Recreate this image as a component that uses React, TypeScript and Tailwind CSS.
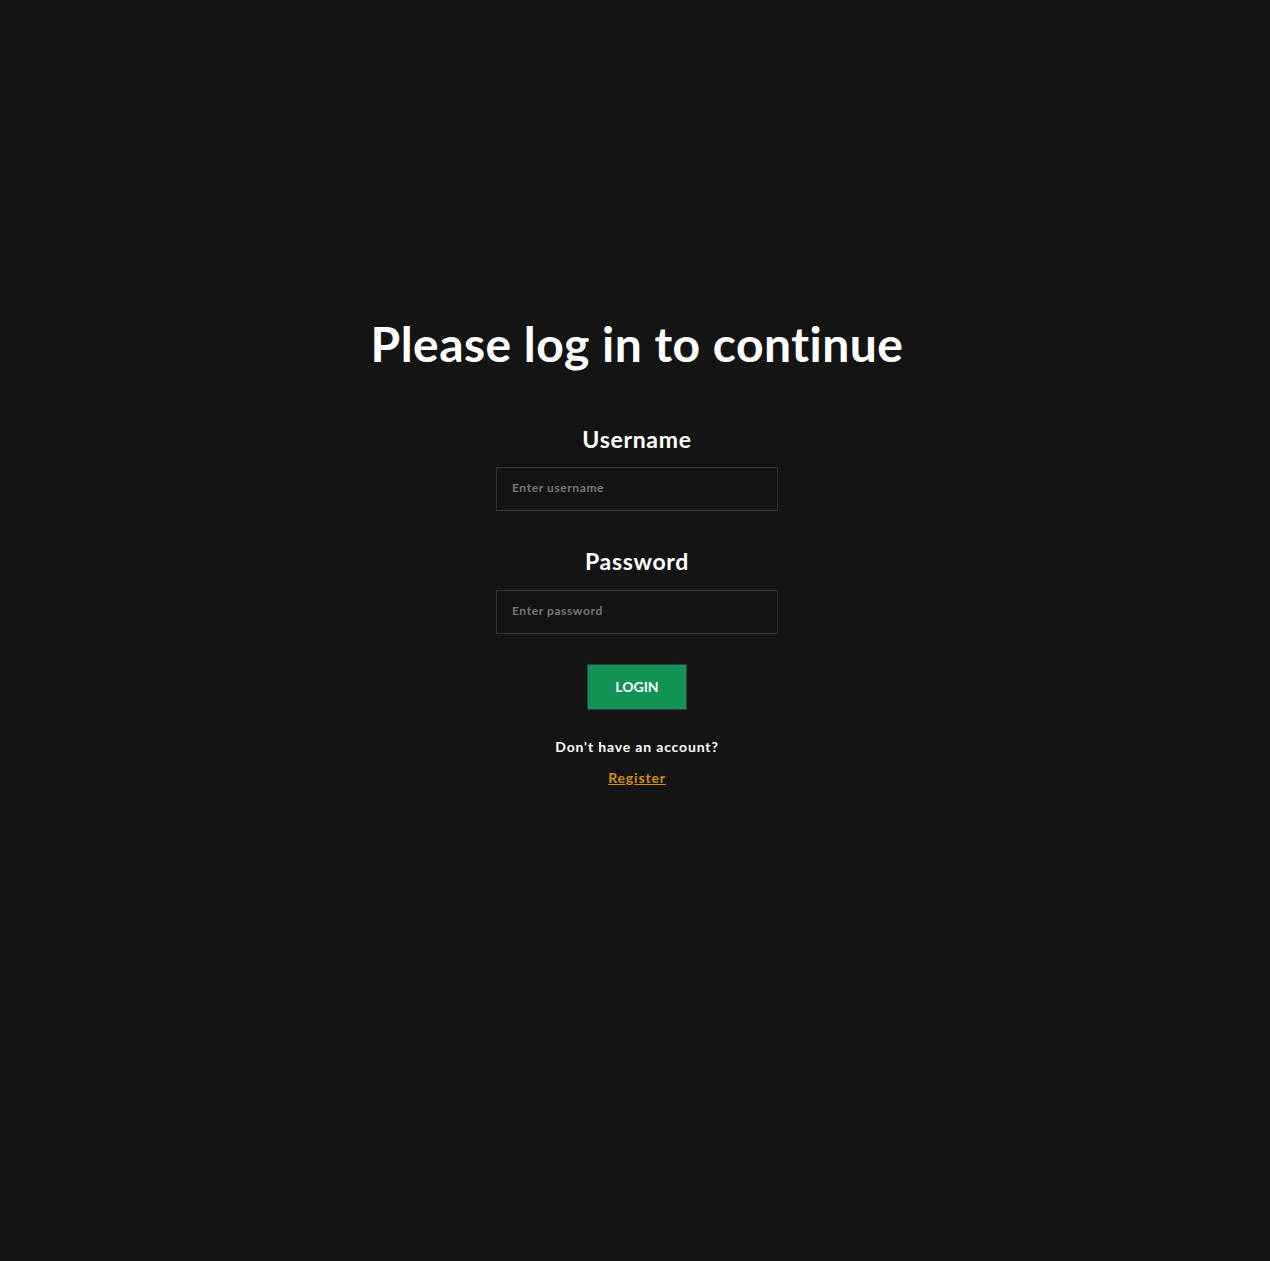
import React from "react";

const font = { fontFamily: "Lato, 'Noto Sans', sans-serif" };

export default function App() {
  return (
    <div className="min-h-[1261px] w-full bg-[#141414] text-white flex flex-col items-center pt-[316px] pl-1" style={font}>
      <h1 className="text-[48px] font-bold leading-[56px] tracking-[0.01em]">Please log in to continue</h1>

      <form className="flex flex-col items-center mt-[52px]" onSubmit={(e) => e.preventDefault()}>
        <label htmlFor="username" className="text-[23px] font-bold leading-[30px] tracking-[0.03em]">Username</label>
        <input
          id="username"
          placeholder="Enter username"
          className="mt-[13px] w-[282px] h-[44px] bg-[#141414] border border-[#333333] px-[15px] pb-[3px] text-[12px] font-bold tracking-[0.05em] text-white placeholder:text-[#777777] outline-none"
        />

        <label htmlFor="password" className="mt-[35px] text-[23px] font-bold leading-[30px] tracking-[0.03em]">Password</label>
        <input
          id="password"
          type="password"
          placeholder="Enter password"
          className="mt-[14px] w-[282px] h-[44px] bg-[#141414] border border-[#333333] px-[15px] pb-[3px] text-[12px] font-bold tracking-[0.05em] text-white placeholder:text-[#777777] outline-none"
        />

        <button type="submit" className="mt-[30px] w-[100px] h-[46px] bg-[#109354] border border-[#3a3a3a] text-[14px] font-bold pb-[2px]">
          LOGIN
        </button>
      </form>

      <p className="mt-[27px] text-[14px] font-bold leading-[20px] tracking-[0.06em]">Don't have an account?</p>
      <a href="#" className="mt-[11px] text-[14px] font-bold leading-[20px] tracking-[0.06em] text-[#d4900c] underline">Register</a>
    </div>
  );
}
